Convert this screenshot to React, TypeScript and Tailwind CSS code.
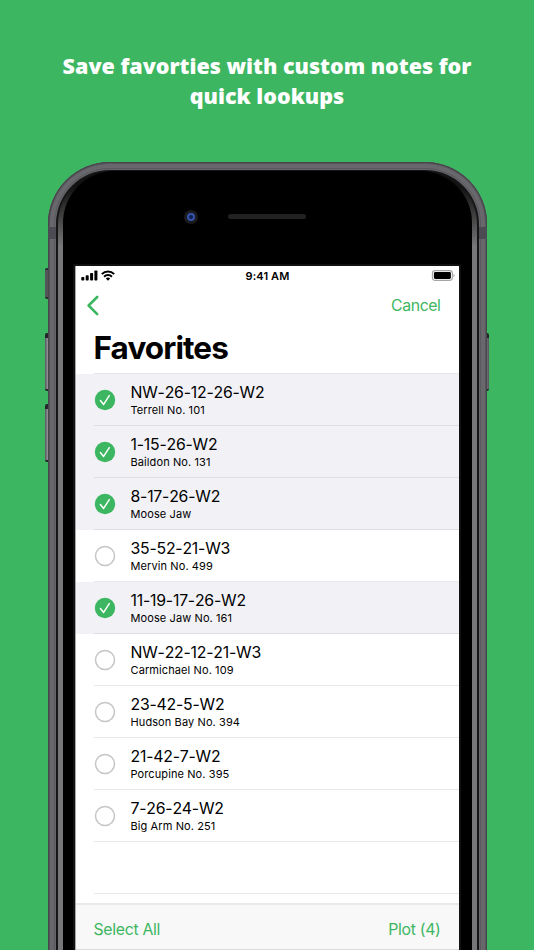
import { clsx } from "clsx";

type Favorite = {
  location: string;
  note: string;
  selected: boolean;
};

const favorites: Favorite[] = [
  { location: "NW-26-12-26-W2", note: "Terrell No. 101", selected: true },
  { location: "1-15-26-W2", note: "Baildon No. 131", selected: true },
  { location: "8-17-26-W2", note: "Moose Jaw", selected: true },
  { location: "35-52-21-W3", note: "Mervin No. 499", selected: false },
  { location: "11-19-17-26-W2", note: "Moose Jaw No. 161", selected: true },
  { location: "NW-22-12-21-W3", note: "Carmichael No. 109", selected: false },
  { location: "23-42-5-W2", note: "Hudson Bay No. 394", selected: false },
  { location: "21-42-7-W2", note: "Porcupine No. 395", selected: false },
  { location: "7-26-24-W2", note: "Big Arm No. 251", selected: false },
];

function StatusBar() {
  return (
    <div className="flex h-[19px] items-center justify-between pl-[5px] pr-[3px]">
      <div className="flex w-[60px] items-center gap-[3px]">
        <svg width="17" height="11" viewBox="0 0 17 11">
          <rect x="0.3" y="7" width="3" height="3.5" rx="0.8" />
          <rect x="4.7" y="5.3" width="3" height="5.2" rx="0.8" />
          <rect x="9.1" y="3" width="3" height="7.5" rx="0.8" />
          <rect x="13.4" y="0.5" width="3" height="10" rx="0.8" />
        </svg>
        <svg width="14" height="11" viewBox="0 0 14 11" fill="none" stroke="#000" strokeWidth="2">
          <path d="M0.8 4.1a8.8 8.8 0 0 1 12.4 0" />
          <path d="M3.1 6.7a5.5 5.5 0 0 1 7.8 0" />
          <path d="M7 10.8 4.8 8.6a3.1 3.1 0 0 1 4.4 0z" fill="#000" stroke="none" />
        </svg>
      </div>
      <span className="pt-[1px] text-[11px] leading-none font-semibold tracking-[0.1px]">9:41 AM</span>
      <div className="flex w-[61px] justify-end">
        <svg width="24" height="12" viewBox="0 0 24 12">
          <rect x="1.4" y="0.6" width="20" height="9.8" rx="2.8" fill="#fff" stroke="#a5a5a5" strokeWidth="1.1" />
          <rect x="2.9" y="2.1" width="17" height="6.8" rx="1.4" />
          <path d="M22.6 3.8v3.4c1.3-.5 1.3-2.9 0-3.4z" fill="#999" />
        </svg>
      </div>
    </div>
  );
}

function CheckCircle({ checked }: { checked: boolean }) {
  return (
    <svg width="22" height="22" viewBox="0 0 22 22" fill="none" className="shrink-0">
      {checked ? (
        <>
          <circle cx="11" cy="11" r="10.2" fill="#3db661" />
          <path d="M6.4 11.6 9.6 15.4 15.3 6.7" stroke="#fff" strokeWidth="1.5" strokeLinecap="round" strokeLinejoin="round" />
        </>
      ) : (
        <circle cx="11" cy="11" r="9.5" stroke="#c5c5c7" strokeWidth="1.5" />
      )}
    </svg>
  );
}

function FavoriteRow({ favorite }: { favorite: Favorite }) {
  return (
    <div className={clsx("flex h-[52px] pl-[18px]", favorite.selected && "bg-[#f2f1f6]")}>
      <div
        className={clsx(
          "flex flex-1 items-center gap-[15px] border-b",
          favorite.selected ? "border-[#dfdee3]" : "border-[#e8e8e9]",
        )}
      >
        <CheckCircle checked={favorite.selected} />
        <div className="pt-[1px]">
          <div className="text-[15.8px] leading-[19px] tracking-[-0.2px] [font-kerning:none]">{favorite.location}</div>
          <div className="text-[11px] leading-[16px] tracking-[0.1px]">{favorite.note}</div>
        </div>
      </div>
    </div>
  );
}

function Screen() {
  return (
    <div className="flex h-[684px] flex-col border-l border-[#a9a7ad] bg-white text-black">
      <StatusBar />

      {/* Navigation bar */}
      <div className="flex h-[40px] items-center justify-between pl-[10px] pr-[18px]">
        <svg width="14" height="21" viewBox="0 0 14 21" fill="none" stroke="#3db661" strokeWidth="2.6" strokeLinecap="round" strokeLinejoin="round">
          <path d="M11.2 2 2.6 10.5l8.6 8.6" />
        </svg>
        <span className="pt-[2px] text-[15.8px] tracking-[-0.4px] text-[#3db661]">Cancel</span>
      </div>
      <h1 className="ml-[18px] h-[49px] border-b border-[#e6e6e8] pt-[4px] text-[31.5px] leading-[38px] font-bold tracking-[-0.9px]">
        Favorites
      </h1>

      <div className="flex-1">
        {favorites.map((favorite) => (
          <FavoriteRow key={favorite.location} favorite={favorite} />
        ))}
        <div className="ml-[18px] h-[52px] border-b border-[#e8e8e9]" />
      </div>

      {/* Toolbar */}
      <div className="flex h-[47px] items-center justify-between border-t-2 border-b border-t-[#e9e9e9] border-b-[#dcdcdc] bg-[#f8f8f8] pt-[5px] pl-[18px] pr-[18px] text-[15.8px] tracking-[-0.3px] text-[#3db661]">
        <span>Select All</span>
        <span>Plot (4)</span>
      </div>
    </div>
  );
}

function Phone() {
  return (
    <div className="relative mx-auto h-[788px] w-[439px]">
      {/* Side buttons */}
      <div className="absolute top-[106px] -left-[3px] h-[31px] w-[6px] rounded-l-[2px] border-y-2 border-[#2b2a30] bg-[#555459]" />
      <div className="absolute top-[171px] -left-[3px] h-[58px] w-[6px] rounded-l-[2px] border-t-[5px] border-b-2 border-[#25242c] bg-linear-to-r from-[#55545a] via-[#9b999e] to-[#55545a]" />
      <div className="absolute top-[242px] -left-[3px] h-[58px] w-[6px] rounded-l-[2px] border-t-[5px] border-b-2 border-[#25242c] bg-linear-to-r from-[#55545a] via-[#9b999e] to-[#55545a]" />
      <div className="absolute top-[171px] -right-[2px] h-[58px] w-[6px] rounded-r-[2px] border-t-[5px] border-b-2 border-[#25242c] bg-linear-to-r from-[#55545a] via-[#807e84] to-[#55545a]" />

      {/* Metal body */}
      <div className="relative h-[820px] rounded-t-[62px] bg-[#68676c] px-[8px] pt-[8px] shadow-[inset_0_0_0_1px_#47464c,inset_0_0_0_2px_#57565b,inset_0_0_0_6px_#68676c,inset_0_0_0_7px_#5a595e]">
        <div className="absolute top-[65px] left-0 h-[12px] w-[8px] bg-[#4c4b54]" />
        <div className="absolute top-[65px] right-0 h-[12px] w-[8px] bg-[#4c4b54]" />
        <div className="h-full rounded-t-[54px] bg-[#161616] px-[2px] pt-[1px]">
          <div className="h-full rounded-t-[53px] bg-linear-to-b from-[#111] from-[15px] via-[#777678] via-[75px] to-[#777678] px-[5px]">
            <div className="h-full rounded-t-[52px] bg-black pr-[11px] pl-[10px]">
              <div className="flex h-[93px] items-end pb-[40px] pl-[111px]">
                <div className="flex h-[14px] w-[14px] items-center justify-center rounded-full bg-[#1b1b1d]">
                  <div className="h-[8px] w-[8px] rounded-full bg-[radial-gradient(circle,#101c50_20%,#3b5dbb_55%,#1c337a_100%)]" />
                </div>
                <div className="mb-[5px] ml-[30px] h-[5px] w-[78px] rounded-full bg-[#222]" />
              </div>
              <div className="h-[686px] rounded-t-[2px] border-x-2 border-t-2 border-[#111]">
                <Screen />
              </div>
            </div>
          </div>
        </div>
      </div>
    </div>
  );
}

export default function App() {
  return (
    <main className="h-[950px] w-[534px] overflow-hidden bg-[#3db661] font-[Inter,sans-serif]">
      <h2 className="h-[162px] pt-[51px] text-center font-['Open_Sans',sans-serif] text-[21.5px] leading-[29.5px] font-extrabold text-white">
        Save favorties with custom notes for
        <br />
        quick lookups
      </h2>
      <Phone />
    </main>
  );
}
